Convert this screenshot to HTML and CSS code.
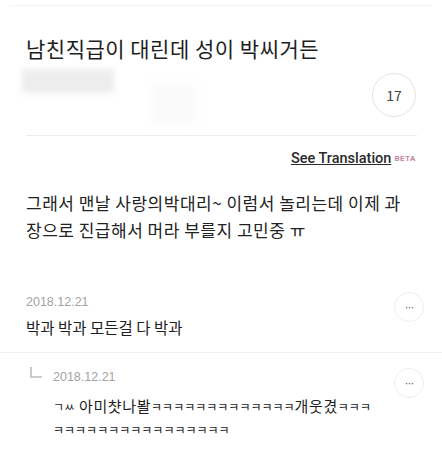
FILE: index.html
```html
<html>
<head>
	<meta charset="utf-8">
	<link rel="stylesheet" href="styles.css">
</head>
<body>
	<div class="topline"></div>

	<article class="post">
		<h1 class="title">남친직급이 대린데 성이 박씨거든</h1>
		<div class="meta">
			<div class="hidden">
				<div class="blur blur-a"></div>
				<div class="blur blur-b"></div>
			</div>
			<div class="count">17</div>
		</div>
		<div class="translate">
			<a href="#">See Translation</a><span class="beta">BETA</span>
		</div>
		<p class="content">그래서 맨날 사랑의박대리~ 이럼서 놀리는데 이제 과장으로 진급해서 머라 부를지 고민중 ㅠ</p>
	</article>

	<section class="comments">
		<div class="comment">
			<div class="comment-body">
				<div class="date">2018.12.21</div>
				<p class="text">박과 박과 모든걸 다 박과</p>
			</div>
			<button class="more">&middot;&middot;&middot;</button>
		</div>
		<div class="comment reply">
			<svg class="reply-icon" width="12" height="11" viewBox="0 0 12 11">
				<path d="M1 0 V10 H12" fill="none" stroke="#bdbdbd" stroke-width="1.6"/>
			</svg>
			<div class="comment-body">
				<div class="date">2018.12.21</div>
				<p class="text"><span class="kk">ㄱㅆ</span> 아미챳나봘<span class="kk">ㅋㅋㅋㅋㅋㅋㅋㅋㅋㅋㅋㅋㅋ</span>개웃겼<span class="kk">ㅋㅋㅋ</span><span class="kk">ㅋㅋㅋㅋㅋㅋㅋㅋㅋㅋㅋㅋㅋㅋㅋㅋ</span></p>
			</div>
			<button class="more">&middot;&middot;&middot;</button>
		</div>
	</section>
</body>
</html>
```

FILE: styles.css
```css
* {
	margin: 0;
	padding: 0;
	box-sizing: border-box;
}
body {
	font-family: "Noto Sans CJK KR", "Noto Sans", sans-serif;
	background: white;
	color: #222;
	width: 442px;
	overflow: hidden;
}

.topline {
	height: 6px;
	border-bottom: 1px solid #f3f3f3;
	margin: 0 10px;
}

.post {
	padding: 0 26px;
}

.title {
	font-size: 21px;
	font-weight: 400;
	line-height: 30px;
	margin-top: 27px;
	color: #1e1e1e;
	letter-spacing: 0.5px;
}

.meta {
	display: flex;
	justify-content: space-between;
	align-items: flex-start;
	height: 73px;
	border-bottom: 1px solid #ececec;
	margin-right: -1px;
}

.hidden {
	position: relative;
	width: 170px;
	height: 60px;
	margin-left: -6px;
}
.blur {
	position: absolute;
	background: #ededed;
	filter: blur(3px);
}
.blur-a {
	left: 2px;
	top: 6px;
	width: 92px;
	height: 24px;
}
.blur-b {
	left: 132px;
	top: 22px;
	width: 44px;
	height: 38px;
	background: #f9f9f9;
	filter: blur(6px);
}

.count {
	width: 44px;
	height: 44px;
	margin-top: 10px;
	border: 1px solid #e4e4e4;
	border-radius: 50%;
	display: flex;
	align-items: center;
	justify-content: center;
	font-size: 14px;
	color: #444;
	margin-right: 1px;
}

.translate {
	text-align: right;
	margin-top: 14px;
	font-family: Roboto, "Liberation Sans", sans-serif;
	line-height: 18px;
}
.translate a {
	color: #2a2a2a;
	font-size: 14.5px;
	font-weight: 500;
	text-decoration: underline;
}
.beta {
	font-size: 8px;
	font-weight: 700;
	letter-spacing: 0.5px;
	color: #c8869c;
	margin-left: 3px;
	vertical-align: 2px;
}

.content {
	font-size: 17px;
	line-height: 27px;
	margin-top: 21px;
	padding-right: 4px;
	color: #222;
	letter-spacing: 0.5px;
}

.comments {
	margin-top: 50px;
}

.comment {
	display: flex;
	align-items: flex-start;
	padding: 0 18px 0 26px;
}
.comment + .comment {
	border-top: 1px solid #efefef;
	padding-top: 15px;
	margin-top: 12px;
}
.comment-body {
	flex: 1;
}
.date {
	font-family: "Liberation Sans", Arial, sans-serif;
	font-size: 12.5px;
	color: #a3a3a3;
	line-height: 18px;
}
.text {
	font-size: 15.5px;
	line-height: 25px;
	margin-top: 4px;
	color: #1e1e1e;
}

.more {
	width: 30px;
	height: 30px;
	border: 1px solid #eeeeee;
	border-radius: 50%;
	background: white;
	color: #666;
	font-size: 12px;
	letter-spacing: -1px;
	line-height: 1;
	margin-top: -1px;
}
.reply .more {
	margin-top: 0;
}

.reply .reply-icon {
	margin: -1px 11px 0 4px;
	flex: none;
}
.reply .comment-body {
	padding-right: 18px;
}
.reply .text {
	font-size: 15px;
	line-height: 23px;
	margin-top: 8px;
	letter-spacing: 0.6px;
}
.kk {
	font-size: 12px;
	letter-spacing: 0;
}
```
